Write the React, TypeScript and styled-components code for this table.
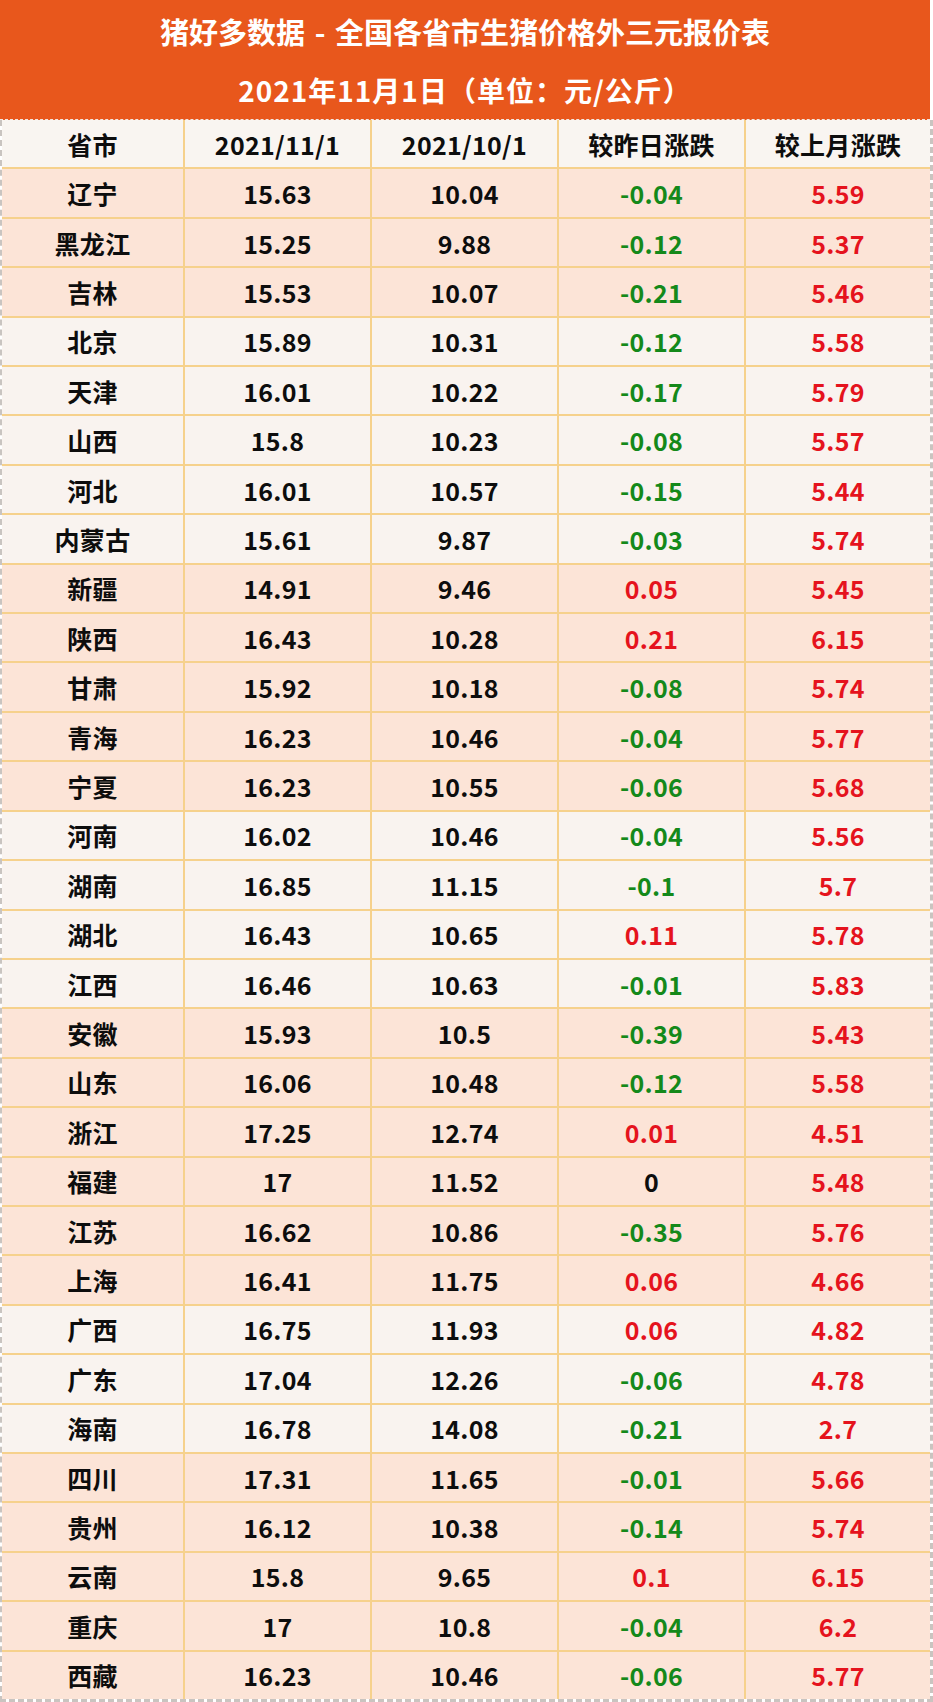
import React from "react";
import styled, { createGlobalStyle } from "styled-components";

const GlobalStyle = createGlobalStyle`
	html, body {
		margin: 0;
		padding: 0;
		background: #ffffff;
	}
	body {
		font-family: "Noto Sans CJK SC", "Noto Sans", sans-serif;
	}
`;

const Sheet = styled.div`
	width: 933px;
	height: 1702px;
	display: flex;
	flex-direction: column;
	box-sizing: border-box;
	font-family: "Noto Sans CJK SC", "Noto Sans", sans-serif;
	font-weight: 700;
`;

const Banner = styled.header`
	height: 120px;
	display: flex;
	flex-direction: column;
	background: #e8571c;
	color: #ffffff;
	margin-right: 3px;
	border-bottom: 1px dashed #f3e6df;
	box-sizing: border-box;
`;

const BannerLine = styled.div<{ $wide?: boolean }>`
	flex: 1;
	display: flex;
	align-items: center;
	justify-content: center;
	font-size: ${(p) => (p.$wide ? "28px" : "29px")};
	letter-spacing: ${(p) => (p.$wide ? "1px" : "0")};
	word-spacing: ${(p) => (p.$wide ? "0" : "3px")};
	padding-top: 2px;
`;

const Table = styled.div`
	flex: 1;
	display: flex;
	flex-direction: column;
	border-left: 2px dashed #c9c4c0;
	border-right: 3px dashed #c9c4c0;
	border-bottom: 3px dashed #c9c4c0;
`;

const Row = styled.div<{ $tone: "head" | "pink" | "light" }>`
	flex: 1;
	display: grid;
	grid-template-columns: 183px 187px 187px 187px 1fr;
	background: ${(p) =>
		p.$tone === "head" ? "#f9f5f1" : p.$tone === "pink" ? "#fce4d7" : "#f9f3ef"};
	border-bottom: 2px solid #f6d18c;
	&:last-child {
		border-bottom: none;
	}
`;

const Cell = styled.div<{ $color?: string }>`
	display: flex;
	align-items: center;
	justify-content: center;
	font-size: 25px;
	letter-spacing: 0.3px;
	color: ${(p) => p.$color || "#0d0d0d"};
	border-right: 2px solid #f6d18c;
	&:last-child {
		border-right: none;
	}
`;

type Item = [string, string, string, string, string];

const groups: { tone: "pink" | "light"; rows: Item[] }[] = [
	{
		tone: "pink",
		rows: [
			["辽宁", "15.63", "10.04", "-0.04", "5.59"],
			["黑龙江", "15.25", "9.88", "-0.12", "5.37"],
			["吉林", "15.53", "10.07", "-0.21", "5.46"],
		],
	},
	{
		tone: "light",
		rows: [
			["北京", "15.89", "10.31", "-0.12", "5.58"],
			["天津", "16.01", "10.22", "-0.17", "5.79"],
			["山西", "15.8", "10.23", "-0.08", "5.57"],
			["河北", "16.01", "10.57", "-0.15", "5.44"],
			["内蒙古", "15.61", "9.87", "-0.03", "5.74"],
		],
	},
	{
		tone: "pink",
		rows: [
			["新疆", "14.91", "9.46", "0.05", "5.45"],
			["陕西", "16.43", "10.28", "0.21", "6.15"],
			["甘肃", "15.92", "10.18", "-0.08", "5.74"],
			["青海", "16.23", "10.46", "-0.04", "5.77"],
			["宁夏", "16.23", "10.55", "-0.06", "5.68"],
		],
	},
	{
		tone: "light",
		rows: [
			["河南", "16.02", "10.46", "-0.04", "5.56"],
			["湖南", "16.85", "11.15", "-0.1", "5.7"],
			["湖北", "16.43", "10.65", "0.11", "5.78"],
			["江西", "16.46", "10.63", "-0.01", "5.83"],
		],
	},
	{
		tone: "pink",
		rows: [
			["安徽", "15.93", "10.5", "-0.39", "5.43"],
			["山东", "16.06", "10.48", "-0.12", "5.58"],
			["浙江", "17.25", "12.74", "0.01", "4.51"],
			["福建", "17", "11.52", "0", "5.48"],
			["江苏", "16.62", "10.86", "-0.35", "5.76"],
			["上海", "16.41", "11.75", "0.06", "4.66"],
		],
	},
	{
		tone: "light",
		rows: [
			["广西", "16.75", "11.93", "0.06", "4.82"],
			["广东", "17.04", "12.26", "-0.06", "4.78"],
			["海南", "16.78", "14.08", "-0.21", "2.7"],
		],
	},
	{
		tone: "pink",
		rows: [
			["四川", "17.31", "11.65", "-0.01", "5.66"],
			["贵州", "16.12", "10.38", "-0.14", "5.74"],
			["云南", "15.8", "9.65", "0.1", "6.15"],
			["重庆", "17", "10.8", "-0.04", "6.2"],
			["西藏", "16.23", "10.46", "-0.06", "5.77"],
		],
	},
];

const changeColor = (v: string) => {
	const n = parseFloat(v);
	if (n > 0) return "#e5131d";
	if (n < 0) return "#14891a";
	return "#0d0d0d";
};

const App: React.FC = () => {
	return (
		<>
			<GlobalStyle />
			<Sheet>
				<Banner>
					<BannerLine>猪好多数据 - 全国各省市生猪价格外三元报价表</BannerLine>
					<BannerLine $wide>2021年11月1日（单位：元/公斤）</BannerLine>
				</Banner>
				<Table>
					<Row $tone="head">
						<Cell>省市</Cell>
						<Cell>2021/11/1</Cell>
						<Cell>2021/10/1</Cell>
						<Cell>较昨日涨跌</Cell>
						<Cell>较上月涨跌</Cell>
					</Row>
					{groups.flatMap((g) =>
						g.rows.map((r) => (
							<Row key={r[0]} $tone={g.tone}>
								<Cell>{r[0]}</Cell>
								<Cell>{r[1]}</Cell>
								<Cell>{r[2]}</Cell>
								<Cell $color={changeColor(r[3])}>{r[3]}</Cell>
								<Cell $color={changeColor(r[4])}>{r[4]}</Cell>
							</Row>
						))
					)}
				</Table>
			</Sheet>
		</>
	);
};

export default App;
